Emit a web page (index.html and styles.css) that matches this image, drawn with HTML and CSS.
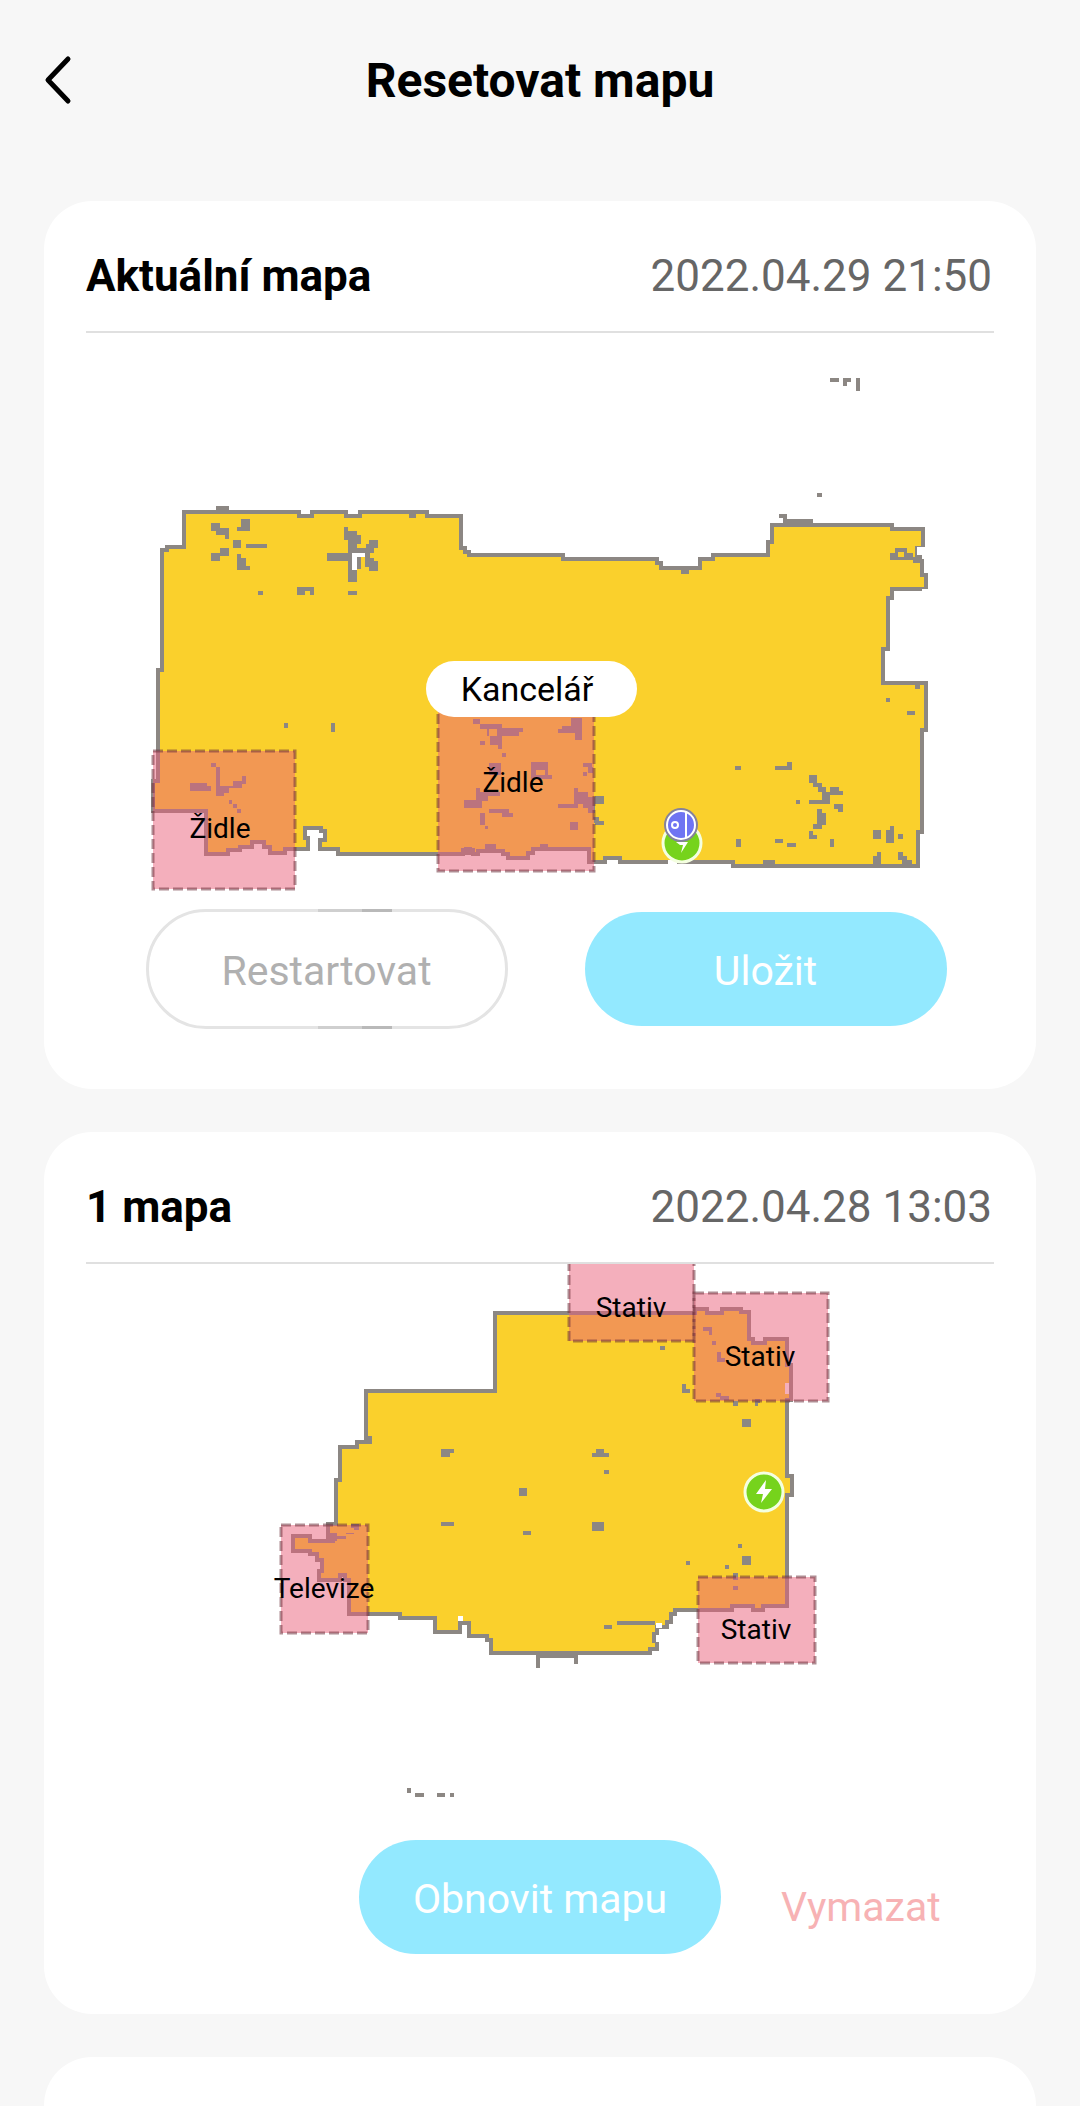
FILE: index.html
```html
<!DOCTYPE html>
<html lang="cs">

<head>
    <meta charset="UTF-8">
    <meta name="viewport" content="width=device-width, initial-scale=1.0">
    <title>Resetovat mapu</title>
    <link rel="stylesheet" href="styles.css">
</head>

<body>
    <header class="topbar">
        <button class="back" type="button" aria-label="Zpět">
            <svg width="30" height="52" viewBox="0 0 30 52">
                <path d="M26 4 L6 25 L26 46" />
            </svg>
        </button>
        <h1>Resetovat mapu</h1>
    </header>

    <main class="cards">
        <section class="card">
            <div class="card-head">
                <h2>Aktuální mapa</h2>
                <time datetime="2022-04-29T21:50">2022.04.29 21:50</time>
            </div>
            <svg class="map" viewBox="86 333 908 576">
                <!-- Floor and walls -->
                <path class="room" d="M184 512H299V516H312V512H346V516H360V512H427V516H461V548H465V552H469V555H563V559H657V563H661V568H700V559H713V555H768V542H772V525H892V529H923V548H917V556H922V575H926V589H892V598H888V649H883V683H926V730H922V832H918V866H733V862H620V858H605V862H589V849H533V853H528V858H508V854H503V851H494V846H487V851H478V854H473V850H463V854H338V849H320V840H325V831H321V828H305V838H308V849H285V853H270V847H264V842H252V847H240V850H228V854H206V811H153V781H158V670H162V550H167V547H184Z" />
                <path class="gap" d="M310 830h8v22h-8zM352 553h13v4h-8v13h-5zM917 547h11v12h-6v-4h-5zM922 589h8v4h-8zM915 673h9v7h-9zM668 860h9v5h-9z" />
                <!-- Obstacles -->
                <path class="block" d="M216 506h13v6h-13zM409 513h7v5h-7zM211 523h9v5h9v11h-4v-4h-9v-4h-5zM241 519h9v12h-13v-4h4zM233 540h8v8h-8zM246 544h21v4h-21zM220 548h9v8h-9v5h-9v-8h9zM237 554h4v4h5v8h4v4h-13zM258 591h5v4h-5zM297 587h17v8h-4v-4h-5v4h-8zM348 591h9v4h-9zM284 723h4v5h-4zM331 723h4v9h-4z" />
                <path class="block" d="M344 527h4v4h9v4h4v9h-4v4h9v-4h3v-4h9v8h-4v5h-4v5h4v3h4v10h-9v-4h-4v-10h-4v12h-4v13h-9v-21h-21v-8h21v-13h-4zM352 553v17h5v-13h8v-4z" />
                <path class="block" d="M211 763h5v4h4v19h13v-5h9v-5h4v8h-4v4h-13v5h-5v3h-8v-29h-5zM190 783h17v8h-17zM207 786h4v5h-4zM229 800h3v4h-3zM233 804h4v4h-4zM237 809h4v4h-4z" />
                <path class="block" d="M473 719h7v5h22v4h21v4h-4v4h-17v13h-4v-4h-8v-9h-3v-7h-7v-5h-7zM489 729v7h8v-7zM562 726h9v-8h11v22h-7v-7h-17v-4h4zM480 741h5v4h-5zM502 753h4v4h-4zM489 763h12v12h-12zM531 762h17v17h-17zM536 770v5h9v-5zM548 775h4v4h-4zM583 763h9v4h-9zM588 767h5v6h-5zM583 772h4v4h-4z" />
                <path class="block" d="M476 788h4v4h20v4h-12v5h-6v7h-18v-8h12zM574 788h4v4h10v5h7v-1h9v8h-9v9h-7v-5h-5v-4h-5v4h-20v-4h16zM480 813h5v12h-5zM485 826h3v3h-3zM489 809h20v4h4v4h-11v-4h-13zM570 822h8v8h-8zM593 817h6v4h5v4h-9zM540 844h8v5h-8zM485 844h8v9h-8zM464 847h8v8h-8zM681 569h8v5h-8z" />
                <path class="block" d="M830 378h9v4h-9zM843 378h8v4h-4v4h-4zM856 378h4v13h-4zM817 493h5v4h-5zM779 514h8v5h26v5h-30v-6h-4zM895 548h12v5h6v4h9v6h-9v-3h-23v-7h5zM898 552v5h6v-5zM915 685h5v4h-5zM886 698h4v4h-4zM907 711h8v4h-8zM735 766h6v4h-6zM775 766h12v-4h5v8h-17zM796 800h4v4h-4z" />
                <path class="block" d="M809 775h8v8h5v4h4v5h4v-5h9v4h4v4h-13v9h-21v-4h13v-8h-4v-5h-5v-4h-4zM834 804h9v8h-5v-3h-4zM817 809h5v4h4v12h-4v4h-9v-5h4zM809 831h4v4h4v4h-8zM736 839h5v8h-5zM775 839h8v4h-8zM787 843h9v4h-9zM830 839h4v8h-4zM873 830h8v9h-8zM886 830h4v-4h4v17h-8zM898 834h5v5h-5zM877 852h4v14h-8v-10h4zM898 852h5v4h4v4h5v5h-10v-5h-4zM763 860h12v5h-12z" />
                <!-- No-go zones -->
                <rect class="zone" x="153" y="751" width="142" height="138" />
                <rect class="zone" x="438" y="700" width="156" height="171" />
                <text class="zone-label" x="220" y="838">Židle</text>
                <text class="zone-label" x="513" y="792">Židle</text>
                <rect class="room-tag" x="426" y="661" width="211" height="56" rx="28" />
                <text class="room-label" x="527" y="701">Kancelář</text>
                <!-- Dock with the robot on it -->
                <g transform="translate(682 843)">
                    <circle class="dock" r="19" />
                    <path class="bolt" d="M-6 -1H6L-1 10L1 2H-2Z" />
                </g>
                <g transform="translate(681 825)">
                    <circle class="robot-edge" r="17" />
                    <circle class="robot" r="14" />
                    <path class="robot-line" d="M5 -13V13" />
                    <circle class="robot-line" cx="-6" r="3" />
                </g>
            </svg>
            <div class="actions pair">
                <button class="btn outline" type="button">Restartovat</button>
                <button class="btn primary" type="button">Uložit</button>
            </div>
        </section>

        <section class="card">
            <div class="card-head">
                <h2>1 mapa</h2>
                <time datetime="2022-04-28T13:03">2022.04.28 13:03</time>
            </div>
            <svg class="map" viewBox="86 1264 908 576">
                <!-- Floor and walls -->
                <path class="room" d="M495 1313H695V1309H707V1313H722V1309H741V1312H749V1339H753V1343H765V1339H787V1365H791V1400H787V1476H792V1495H787V1606H763V1610H753V1606H732V1610H675V1614H671V1622H667V1627H657V1634H654V1641H657V1649H650V1653H491V1640H487V1636H469V1623H460V1632H435V1618H400V1614H349V1580H345V1575H340V1580H319V1571H322V1560H317V1554H310V1551H293V1536H310V1541H333V1537H328V1524H336V1480H340V1447H357V1442H366V1391H495Z" />
                <path class="gap" d="M458 1616h5v5h-5zM462 1625h5v10h-5zM656 1623h6v5h-6zM656 1635h5v7h-5zM785 1383h4v11h-4z" />
                <!-- Obstacles -->
                <path class="block" d="M364 1436h8v8h-8zM329 1533h8v3h9v-3h8v-5h-3v-4h8v6h-5v4h-8v5h-9v2h-6zM441 1449h13v4h-4v4h-9zM519 1488h8v8h-8zM441 1522h13v4h-13zM523 1531h8v4h-8zM536 1653h42v11h-4v-6h-34v10h-4z" />
                <path class="block" d="M660 1346h5v4h-5zM682 1384h4v5h4v4h-8zM733 1401h5v5h-5zM755 1399h5v4h-2v3h-3zM742 1419h9v8h-9zM596 1449h8v4h5v4h-17v-4h4zM604 1470h5v4h-5zM592 1522h12v9h-12zM738 1544h4v4h-4zM742 1556h9v9h-9zM686 1561h4v4h-4zM725 1565h4v4h-4zM733 1573h5v7h-5zM733 1586h5v4h-5zM617 1621h38v4h-38zM604 1625h8v4h-8z" />
                <path class="block" d="M703 1327h9v8h-3v-4h-6zM712 1341h4v4h-4zM717 1352h4v6h4v4h-8zM716 1393h5v3h8v4h-9v-3h-4z" />
                <path class="block" d="M407 1788h4v5h-4zM415 1793h9v4h-9zM437 1793h8v4h-8zM450 1793h4v4h-4z" />
                <!-- No-go zones -->
                <rect class="zone" x="569" y="1255" width="125" height="86" />
                <rect class="zone" x="694" y="1293" width="134" height="108" />
                <rect class="zone" x="698" y="1577" width="117" height="86" />
                <rect class="zone" x="281" y="1525" width="87" height="108" />
                <text class="zone-label" x="631" y="1317">Stativ</text>
                <text class="zone-label" x="760" y="1366">Stativ</text>
                <text class="zone-label" x="756" y="1639">Stativ</text>
                <text class="zone-label" x="324" y="1598">Televize</text>
                <!-- Dock -->
                <g transform="translate(764 1492)">
                    <circle class="dock" r="19" />
                    <path class="bolt" d="M2 -12L-8 2H-1L-3 11L8 -3H1Z" />
                </g>
            </svg>
            <div class="actions single">
                <button class="btn primary" type="button">Obnovit mapu</button>
                <button class="delete" type="button">Vymazat</button>
            </div>
        </section>

        <section class="card next"></section>
    </main>
</body>

</html>
```
FILE: styles.css
```css
* {
    box-sizing: border-box;
}

body {
    display: flex;
    flex-direction: column;
    min-height: 100vh;
    margin: 0;
    background-color: #f7f7f7;
    color: #000000;
    font-family: Roboto, "Liberation Sans", sans-serif;
}

button {
    padding: 0;
    border: none;
    background: none;
    font-family: inherit;
    font-size: 41px;
    cursor: pointer;
}

h1,
h2 {
    margin: 0;
    font-weight: 700;
}

/* Top bar */
.topbar {
    display: grid;
    grid-template-columns: 1fr auto 1fr;
    align-items: center;
    height: 160px;
    padding: 2px 42px 0;
}

.topbar h1 {
    font-size: 48px;
    line-height: 56px;
}

.back {
    display: flex;
    justify-self: start;
}

.back path {
    fill: none;
    stroke: #000000;
    stroke-width: 5;
    stroke-linecap: round;
    stroke-linejoin: round;
}

/* Cards */
.cards {
    display: flex;
    flex: 1;
    flex-direction: column;
    gap: 43px;
    padding: 41px 44px 0;
}

.card {
    padding: 0 42px 60px;
    background-color: #ffffff;
    border-radius: 48px;
}

.card.next {
    flex: 1;
    padding: 0;
    min-height: 48px;
    border-radius: 48px 48px 0 0;
}

.card-head {
    display: flex;
    align-items: center;
    justify-content: space-between;
    height: 132px;
    padding: 20px 2px 0 0;
    border-bottom: 2px solid #e0e0e0;
}

.card-head h2 {
    font-size: 44px;
}

.card-head time {
    color: #666666;
    font-size: 44px;
}

/* Map drawing */
.map {
    display: block;
    width: 100%;
}

.room {
    fill: #fad02c;
    stroke: #8c8783;
    stroke-width: 4;
    shape-rendering: crispEdges;
}

.block {
    fill: #8c8783;
    shape-rendering: crispEdges;
}

.gap {
    fill: #ffffff;
    shape-rendering: crispEdges;
}

.zone {
    fill: rgba(233, 95, 121, 0.5);
    stroke: rgba(110, 50, 60, 0.55);
    stroke-width: 3;
    stroke-dasharray: 10 4;
}

.zone-label,
.room-label {
    fill: #000000;
    font-size: 28px;
    text-anchor: middle;
}

.room-label {
    font-size: 34px;
}

.room-tag {
    fill: #ffffff;
}

.dock {
    fill: #76d31c;
    stroke: #f4ffe0;
    stroke-width: 3;
}

.bolt {
    fill: #ffffff;
}

.robot-edge {
    fill: #85829c;
}

.robot {
    fill: #6f74f2;
    stroke: #ffffff;
    stroke-width: 2;
}

.robot-line {
    fill: none;
    stroke: #ffffff;
    stroke-width: 2;
}

/* Buttons under the map */
.actions {
    display: flex;
    align-items: center;
}

.pair {
    justify-content: center;
    gap: 77px;
    padding-left: 12px;
}

.single {
    display: grid;
    grid-template-columns: 1fr auto 1fr;
}

.single .btn {
    grid-column: 2;
}

.btn {
    position: relative;
    width: 362px;
    height: 114px;
    padding-top: 4px;
    border-radius: 60px;
}

.primary {
    background-color: #93e9ff;
    color: #ffffff;
}

.outline {
    height: 120px;
    border: 3px solid #e4e4e4;
    color: #b0b0b0;
}

/* Darker part of the outline, top and bottom */
.outline::before,
.outline::after {
    content: "";
    position: absolute;
    left: 169px;
    width: 74px;
    height: 3px;
    background: linear-gradient(to right, #cfcfcf 60%, #b9b9b9 60%);
}

.outline::before {
    top: -3px;
}

.outline::after {
    bottom: -3px;
}

.delete {
    justify-self: start;
    padding: 20px 0 0 60px;
    color: #f7b2b4;
}
```
